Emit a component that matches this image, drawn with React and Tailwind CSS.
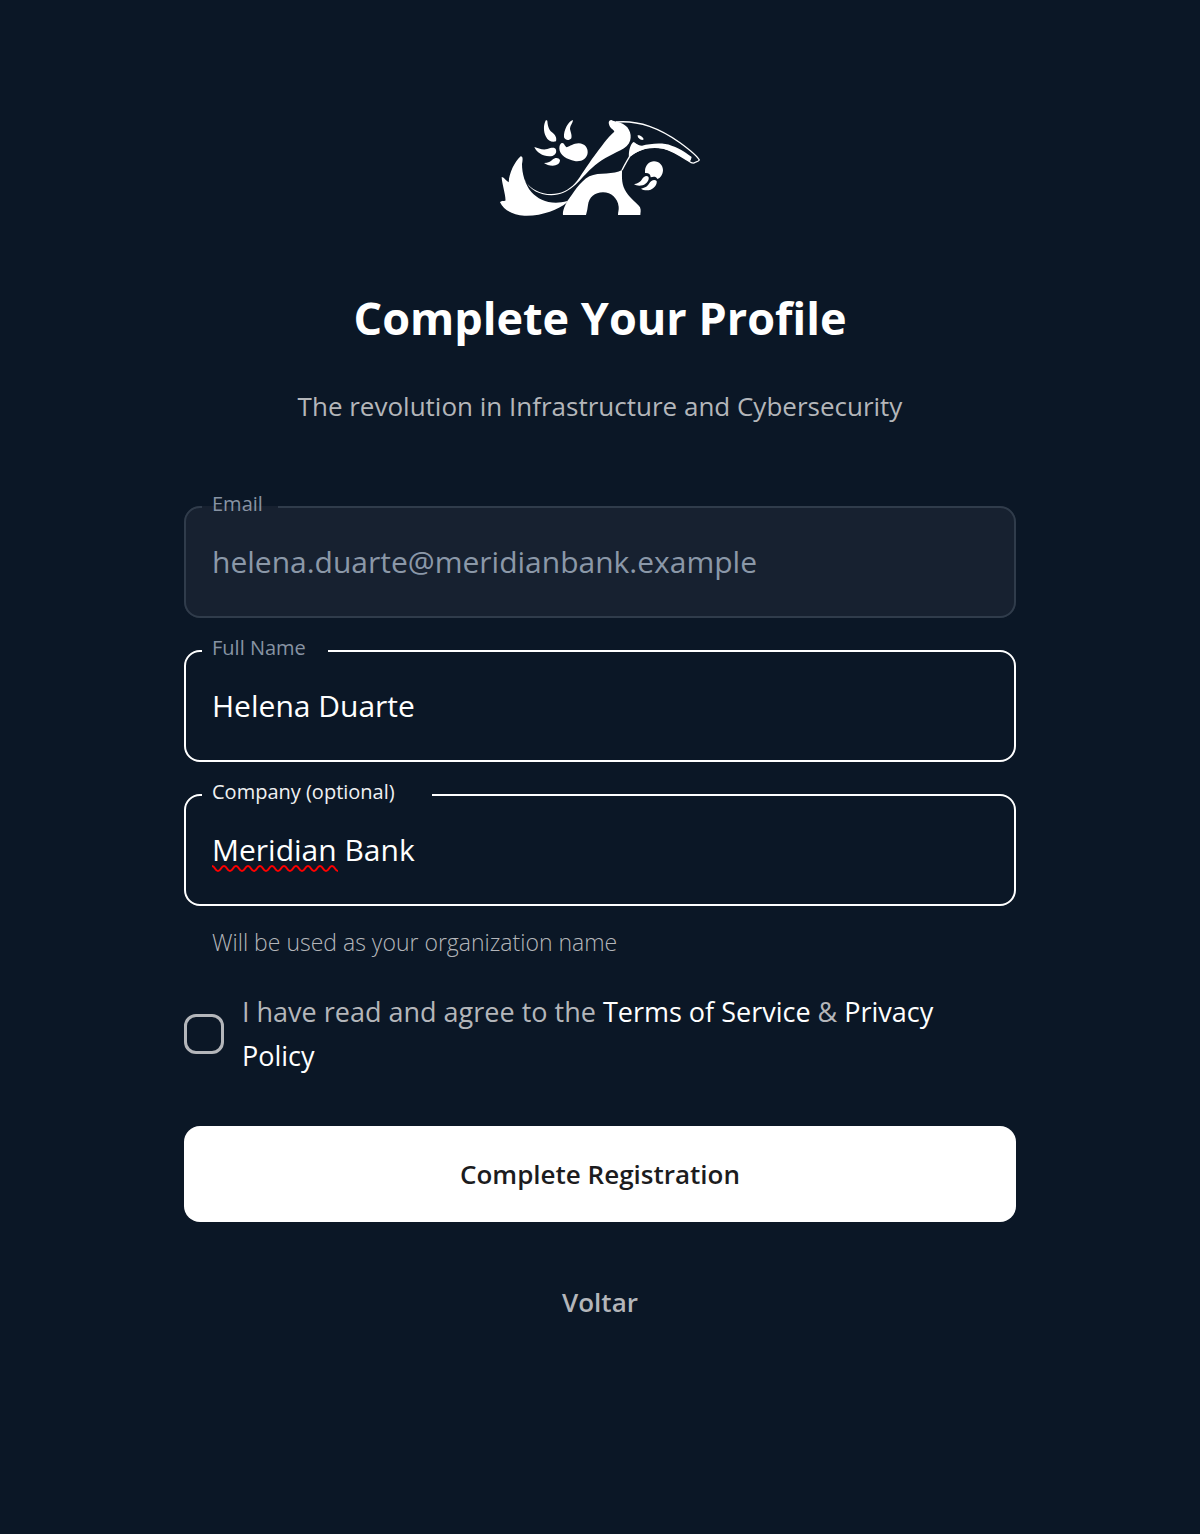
import { useState } from "react";

const Logo = () => (
    <svg
        viewBox="30 30 600 288"
        className="w-[200px] h-24 text-white"
        fill="currentColor"
        role="img"
        aria-label="Logo"
    >
        {/* tail */}
        <path d="M30 277C32 272 40 273 46 272C49 262 35 218 35 201C41 201 48 212 56 217C57 190 74 155 92 139C100 139 98 150 96 162C96 190 104 222 124 246C147 272 186 286 232 273L230 278C205 298 155 319 103 317C70 315 42 302 30 277Z" />
        {/* back line, neck and head */}
        <path d="M103 208C120 241 150 256 184 256C240 254 264 215 299 180L315 166C340 145 375 130 402 115C428 98 426 70 412 52C396 34 376 37 364 30C354 31 355 40 360 50C364 57 371 58 373 65C360 75 345 94 315 135C290 168 272 200 255 220C236 241 212 252 184 252C152 252 124 239 105 212Z" />
        {/* body and legs */}
        <path d="M219 315C217 301 226 286 232 273C250 250 268 216 298 199C328 185 372 196 396 180C396 205 394 225 410 248C420 265 443 280 450 292C454 302 451 309 451 315H384C384 305 387 300 386 290C383 265 364 247 339 247C314 247 297 262 294 285C293 295 291 305 288 315Z" />
        <path
            d="M396 181C401 170 410 154 419 139C450 113 480 107 520 114C548 121 580 143 596 153C604 159 609 161 614 158C618 155 624 156 628 150C622 138 600 120 570 98C510 56 450 30 378 36"
            fill="none"
            stroke="currentColor"
            strokeWidth="4"
        />
        {/* snout */}
        <path d="M417 142C415 125 420 105 430 96C435 96 440 106 456 107C480 102 515 96 545 107C575 117 592 131 605 141C603 145 604 149 601 152C599 155 596 154 594 152C570 136 548 123 520 116C480 109 445 118 417 142Z" />
        <path d="M443 76C449 73 460 82 461 88C456 94 441 84 443 76Z" />
        {/* back paw */}
        <path d="M465 184C465 166 478 154 492 154C508 154 519 167 519 181C518 195 511 205 502 207C499 199 490 199 482 202C482 192 475 188 465 189Z" />
        <path d="M432 223C445 221 452 215 456 208C460 199 470 195 475 200C480 207 470 222 458 226C448 229 438 227 432 223Z" />
        <path d="M453 236C466 234 474 228 478 220C482 211 494 207 500 213C502 224 492 235 482 239C472 242 460 241 453 236Z" />
        {/* front paw */}
        <path d="M168 30C160 42 160 66 168 80C174 92 186 98 198 94C201 84 196 74 186 67C175 58 173 45 172 32Z" />
        <path d="M249 30C236 33 220 60 222 82C227 93 238 92 244 85C247 74 240 64 240 55C241 45 249 38 249 30Z" />
        <path d="M133 111C145 114 157 121 172 117C185 112 195 111 198 119C201 131 192 139 178 139C157 138 140 127 133 111Z" />
        <path d="M162 159C175 158 182 155 187 149C195 142 206 142 210 150C210 161 200 167 188 167C178 167 168 164 162 159Z" />
        <path d="M217 99C223 99 224 108 230 112C240 109 250 100 266 100C285 101 294 114 293 128C291 146 275 156 254 153C232 149 208 136 208 115C208 105 212 99 217 99Z" />
    </svg>
);

const Squiggle = () => (
    <svg
        className="absolute left-[26px] bottom-[31px] w-[126px] h-2 pointer-events-none"
        viewBox="0 0 126 8"
        fill="none"
        stroke="#f00"
        strokeWidth="2"
        aria-hidden="true"
    >
        <path d="M0 1C3 1 3 6 6 6S9 1 12 1S15 6 18 6S21 1 24 1S27 6 30 6S33 1 36 1S39 6 42 6S45 1 48 1S51 6 54 6S57 1 60 1S63 6 66 6S69 1 72 1S75 6 78 6S81 1 84 1S87 6 90 6S93 1 96 1S99 6 102 6S105 1 108 1S111 6 114 6S117 1 120 1S123 6 126 6" />
    </svg>
);

const Field = ({ id, label, legendClass, boxClass, inputClass, children, ...props }) => (
    <fieldset className={`relative min-w-0 rounded-2xl border-2 ${boxClass}`}>
        <legend className={`ml-4 pl-2.5 pb-1.5 text-xl leading-6 whitespace-nowrap ${legendClass}`}>
            <label htmlFor={id}>{label}</label>
        </legend>
        {/* the legend covers half of its height inside the box */}
        <input
            id={id}
            className={`block w-full h-[94px] px-[26px] pb-4 bg-transparent text-3xl outline-none ${inputClass}`}
            {...props}
        />
        {children}
    </fieldset>
);

const App = () => {
    const [fullName, setFullName] = useState("Helena Duarte");
    const [company, setCompany] = useState("Meridian Bank");
    const [accepted, setAccepted] = useState(false);

    return (
        <main className="min-h-screen bg-[#0b1726] px-6 pt-[120px] pb-20 font-['Open_Sans',sans-serif] text-[#b4b6ba]">
            <div className="mx-auto max-w-[832px] flex flex-col">
                <div className="flex justify-center">
                    <Logo />
                </div>
                <h1 className="mt-[70px] text-center text-[45px] leading-16 font-bold text-white">
                    Complete Your Profile
                </h1>
                <p className="mt-[34px] text-center text-[26px] leading-11">
                    The revolution in Infrastructure and Cybersecurity
                </p>

                <form
                    className="mt-16 flex flex-col"
                    onSubmit={(event) => event.preventDefault()}
                >
                    <div className="flex flex-col gap-[18px]">
                        <Field
                            id="email"
                            label="Email"
                            type="email"
                            value="helena.duarte@meridianbank.example"
                            disabled
                            legendClass="w-[76px] text-[#8793a3]"
                            boxClass="border-[#303c4b] bg-[#172130]"
                            inputClass="text-[#8b98a8]"
                        />
                        <Field
                            id="full-name"
                            label="Full Name"
                            type="text"
                            value={fullName}
                            onChange={(event) => setFullName(event.target.value)}
                            legendClass="w-[126px] text-[#8793a3]"
                            boxClass="border-white"
                            inputClass="text-white"
                        />
                        <Field
                            id="company"
                            label="Company (optional)"
                            type="text"
                            value={company}
                            onChange={(event) => setCompany(event.target.value)}
                            aria-describedby="company-help"
                            legendClass="w-[230px] font-medium text-[#f0f1f2]"
                            boxClass="border-white"
                            inputClass="text-white"
                        >
                            {company.startsWith("Meridian") && <Squiggle />}
                        </Field>
                    </div>
                    <p id="company-help" className="mt-4 px-7 text-[23px] leading-10 font-light">
                        Will be used as your organization name
                    </p>

                    <div className="mt-7 flex items-center gap-[18px]">
                        <input
                            id="terms"
                            type="checkbox"
                            checked={accepted}
                            onChange={(event) => setAccepted(event.target.checked)}
                            className="size-10 shrink-0 appearance-none rounded-xl border-3 border-[#b4b6ba] checked:bg-[#b4b6ba]"
                        />
                        <label htmlFor="terms" className="pr-12 text-[27px] leading-11">
                            I have read and agree to the{" "}
                            <a href="#terms" className="text-white">
                                Terms of Service
                            </a>{" "}
                            &amp;{" "}
                            <a href="#privacy" className="text-white">
                                Privacy Policy
                            </a>
                        </label>
                    </div>

                    <button
                        type="submit"
                        className="mt-12 h-24 w-full rounded-2xl bg-white text-[26px] font-semibold text-[#1c1c1e]"
                    >
                        Complete Registration
                    </button>
                    <button
                        type="button"
                        className="mt-12 h-16 self-center px-6 text-[26px] font-semibold"
                    >
                        Voltar
                    </button>
                </form>
            </div>
        </main>
    );
};

export default App;
